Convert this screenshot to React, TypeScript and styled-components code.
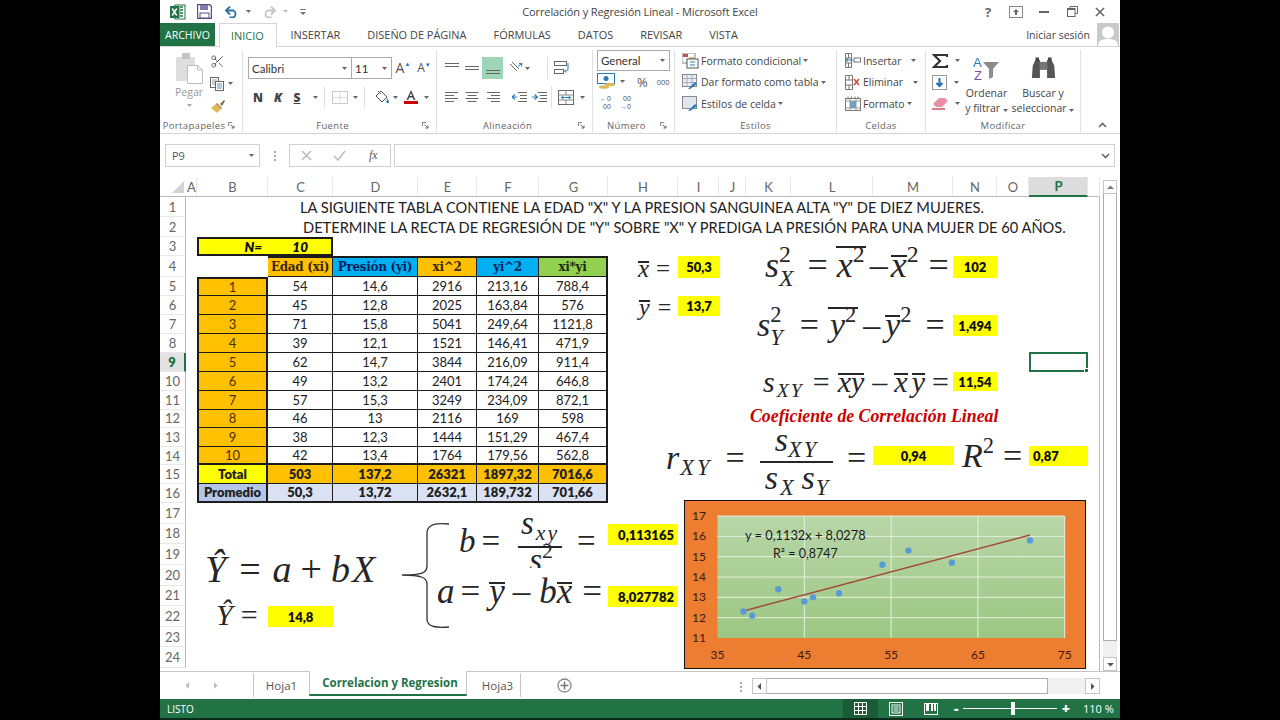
import React from "react";
import styled, { createGlobalStyle } from "styled-components";
import { Scissors } from "lucide-react";

const Global = createGlobalStyle`
  html, body { margin: 0; padding: 0; background: #000; overflow: hidden; }
  #root { width: 1280px; height: 720px; }
  * { box-sizing: border-box; }
`;
const ui = `"Open Sans", "Liberation Sans", sans-serif`;
const cal = `Lato, "Open Sans", sans-serif`;
const serif = `"Liberation Serif", serif`;

const Page = styled.div`width:1280px;height:720px;background:#000;display:flex;justify-content:center;`;
const Win = styled.div`width:960px;height:720px;background:#fff;display:flex;flex-direction:column;font-family:${ui};color:#444;border-bottom:2px solid #0c2a1a;`;

/* title bar */
const TitleBar = styled.div`height:23px;display:grid;grid-template-columns:1fr auto 1fr;align-items:center;`;
const Qat = styled.div`display:flex;align-items:center;padding-left:10px;`;
const QatItem = styled.span<{ $w: number }>`width:${p => p.$w}px;display:flex;align-items:center;`;
const Title = styled.div`font-size:11px;color:#444;letter-spacing:-.12px;`;
const WinCtl = styled.div`display:flex;justify-content:flex-end;align-items:center;padding-right:6px;`;
const CtlBtn = styled.span`width:28px;display:flex;justify-content:center;align-items:center;color:#666;font-weight:700;font-size:13px;`;

/* tabs */
const TabRow = styled.div`height:24px;display:flex;align-items:stretch;border-bottom:1px solid #d4d4d4;position:relative;`;
const FileTab = styled.div`width:55px;background:#217346;color:#fff;font-size:10.5px;display:flex;align-items:center;justify-content:center;margin-right:4px;`;
const Tab = styled.div<{ $active?: boolean }>`padding:0 13.5px;font-size:10.95px;display:flex;align-items:center;color:${p => p.$active ? "#217346" : "#444"};white-space:nowrap;
  ${p => p.$active ? "background:#fff;border:1px solid #d4d4d4;border-bottom:1px solid #fff;height:25px;padding:0 11px;width:58px;" : ""}`;
const Signin = styled.div`margin-left:auto;display:flex;align-items:center;gap:7px;font-size:10.5px;`;
const Avatar = styled.div`width:22px;height:23px;background:#c9c9c9;display:flex;align-items:flex-end;margin-right:1px;`;

/* ribbon */
const Ribbon = styled.div`height:87px;display:flex;padding:3px 0 0;border-bottom:1px solid #d4d4d4;`;
const Group = styled.div<{ $w: number }>`width:${p => p.$w}px;display:flex;flex-direction:column;border-right:1px solid #e1e1e1;margin-bottom:1px;`;
const GroupBody = styled.div<{ $pad?: number }>`flex:1;display:flex;padding-left:${p => p.$pad ?? 0}px;min-height:0;`;
const GroupFoot = styled.div`height:14px;display:flex;align-items:center;`;
const GroupLabel = styled.span`flex:1;text-align:center;font-size:9.5px;letter-spacing:.35px;color:#666;white-space:nowrap;`;
const Launcher = styled.span`width:14px;display:flex;`;
const Collapse = styled.div`flex:1;display:flex;align-items:flex-end;justify-content:flex-end;padding:0 13px 5px 0;`;

const PasteCol = styled.div`width:44px;margin-left:7px;display:flex;flex-direction:column;align-items:center;padding-top:3px;font-size:10.5px;color:#999;`;
const PasteLabel = styled.span`margin-top:1px;line-height:14px;margin-bottom:5px;`;
const SmallCol = styled.div`display:flex;flex-direction:column;align-items:flex-start;padding-top:3px;gap:5px;margin-left:-1px;`;
const SmallBtn = styled.div`height:17px;display:flex;align-items:center;gap:4px;`;

const ToolRows = styled.div`display:flex;flex-direction:column;gap:7px;padding-top:7px;`;
const ToolRow = styled.div`height:22px;display:flex;align-items:center;`;
const Combo = styled.div<{ $w: number; $nl?: boolean }>`width:${p => p.$w}px;height:22px;border:1px solid #ababab;${p => p.$nl ? "border-left:0;" : ""}display:flex;align-items:center;justify-content:space-between;padding:0 4px 0 3px;font-family:${cal};font-size:11.5px;color:#333;`;
const GrowBtn = styled.div<{ $size: number; $w: number }>`width:${p => p.$w}px;font-family:${ui};font-size:${p => p.$size}px;display:flex;justify-content:center;align-items:flex-start;color:#555;line-height:1;`;
const TinyUp = styled.span`font-size:6px;color:#2a6fb6;`;
const FontLetter = styled.span<{ $w: number; $i?: boolean; $u?: boolean }>`width:${p => p.$w}px;text-align:center;font-size:12px;font-weight:800;color:#444;${p => p.$i ? "font-style:italic;" : ""}${p => p.$u ? "text-decoration:underline;" : ""}`;
const Gap = styled.span<{ $w: number }>`width:${p => p.$w}px;flex:none;display:inline-block;`;
const VLine = styled.span`width:1px;height:22px;background:#e1e1e1;flex:none;`;
const IconCell = styled.span<{ $w: number; $on?: boolean }>`width:${p => p.$w}px;height:22px;display:flex;align-items:center;justify-content:center;flex:none;${p => p.$on ? "background:#9fd5b7;" : ""}`;
const NumCombo = styled(Combo)`font-size:11.5px;height:21px;border-color:#ababab;font-family:${cal};`;
const NumRows = styled.div`display:flex;flex-direction:column;padding:0 0 0 4px;`;
const NumRow = styled.div`height:21px;display:flex;align-items:center;font-size:13px;color:#555;`;
const Mini = styled.span`font-size:7.5px;color:#555;`;
const DecStack = styled.span`display:inline-flex;flex-direction:column;align-items:flex-end;font-family:"Liberation Sans",sans-serif;font-size:7px;line-height:8px;color:#555;`;
const DecArrow = styled.span`color:#2a7ab8;`;

const StyleCol = styled.div`display:flex;flex-direction:column;padding:0 0 0 7px;gap:0;`;
const StyleRow = styled.div`height:21.5px;display:flex;align-items:center;gap:2px;font-size:10.5px;white-space:nowrap;color:#444;`;
const StyleIcon = styled.span<{ $w?: number }>`width:${p => p.$w ?? 17}px;display:flex;justify-content:center;`;
const ModCol = styled.div`display:flex;flex-direction:column;padding:0 0 0 6px;width:37px;`;
const BigBtn = styled.div<{ $w: number }>`width:${p => p.$w}px;display:flex;flex-direction:column;align-items:center;font-size:10.5px;line-height:15px;text-align:center;color:#444;white-space:nowrap;padding-top:3px;`;
const BigIcon = styled.div`height:32px;display:flex;align-items:center;justify-content:center;margin-bottom:1px;`;

/* formula bar */
const FormulaBar = styled.div`height:43px;padding:10px 5px 10px 5px;display:flex;align-items:stretch;`;
const NameBox = styled.div`width:95px;border:1px solid #d0d0d0;display:flex;align-items:center;justify-content:space-between;padding:0 5px 0 6px;font-size:11px;color:#555;`;
const Dots = styled.div`width:29px;display:flex;flex-direction:column;align-items:center;justify-content:center;gap:2px;`;
const Dot = styled.span`width:2px;height:2px;background:#aaa;`;
const FxBox = styled.div`width:102px;border:1px solid #d0d0d0;display:flex;align-items:center;margin-right:3px;`;
const FxCell = styled.span`flex:1;display:flex;justify-content:center;align-items:center;`;
const FxText = styled.span`font-family:${serif};font-style:italic;font-size:12px;color:#555;`;
const Input = styled.div`flex:1;border:1px solid #d0d0d0;display:flex;align-items:center;justify-content:flex-end;padding-right:4px;`;

/* sheet */
const Main = styled.div`flex:1;display:flex;min-height:0;`;
const colW = [26, 11, 71, 65, 85, 59, 62, 69, 70, 41, 27, 45, 82, 80, 44, 32, 59, 12];
const rowH = [20, 20, 20, 19, 21, 19, 19, 19, 19, 19, 18.5, 19, 18.5, 19, 18, 19, 18.5, 21, 20.5, 21, 20.5, 20.5, 21, 20, 21];
const Sheet = styled.div`width:940px;position:relative;display:grid;align-content:start;
  grid-template-columns:${colW.map(w => w + "px").join(" ")};
  grid-template-rows:${rowH.map(h => h + "px").join(" ")};border-right:1px solid #bdbdbd;`;
const Corner = styled.div`grid-column:1;grid-row:1;background:#fff;border-bottom:1px solid #b8b8b8;display:flex;align-items:flex-end;justify-content:flex-end;padding:0 2px 3px 0;`;
const ColHead = styled.div<{ $col: number; $on?: boolean }>`grid-row:1;grid-column:${p => p.$col};display:flex;align-items:center;justify-content:center;font-family:${cal};font-size:13px;
  border-right:1px solid #e8e8e8;border-bottom:1px solid #b8b8b8;background:#fff;color:#666;padding-left:1px;
  ${p => p.$on ? "background:#dcdcdc;color:#217346;font-weight:700;border-bottom:2px solid #217346;" : ""}`;
const RowHead = styled.div<{ $row: number; $on?: boolean }>`grid-column:1;grid-row:${p => p.$row};display:flex;align-items:center;justify-content:center;font-family:${cal};font-size:13px;
  border-right:1px solid #b8b8b8;border-bottom:1px solid #e8e8e8;background:#fff;color:#666;
  ${p => p.$on ? "background:#e2e2e2;color:#217346;font-weight:800;border-right:2px solid #217346;" : ""}`;
const HeadingText = styled.div<{ $row: number; $pad: number }>`grid-column:3 / -1;grid-row:${p => p.$row};padding-left:${p => p.$pad}px;font-family:${cal};font-size:14.65px;color:#222;white-space:nowrap;display:flex;align-items:center;`;
const Cell = styled.div<{ $col: number; $row: number; $bg?: string; $b?: boolean; $c?: string; $thickR?: boolean; $thickB?: boolean; $thickL?: boolean; $thickT?: boolean; $hd?: boolean }>`
  grid-column:${p => p.$col};grid-row:${p => p.$row};display:flex;align-items:center;justify-content:center;white-space:nowrap;overflow:hidden;
  background:${p => p.$bg ?? "#fff"};color:${p => p.$c ?? "#222"};font-family:${p => p.$hd ? `"DejaVu Serif", serif` : cal};font-size:${p => p.$hd ? "12px" : "13px"};letter-spacing:${p => p.$hd ? "-.3px" : "0"};
  font-weight:${p => p.$b ? 800 : 400};
  border-right:${p => p.$thickR ? 2 : 1}px solid #1c1c1c;border-bottom:${p => p.$thickB ? 2 : 1}px solid #1c1c1c;
  ${p => p.$thickL ? "border-left:2px solid #1c1c1c;" : ""}${p => p.$thickT ? "border-top:2px solid #1c1c1c;" : ""}`;
const MergedN = styled.div`grid-column:3 / 5;grid-row:4;background:#ffff00;border:2px solid #1c1c1c;display:grid;grid-template-columns:63px 1fr;font-family:${cal};font-weight:800;font-style:italic;font-size:13.5px;color:#111;align-items:center;text-align:right;padding-right:23px;`;
const Selected = styled.div`grid-column:17;grid-row:10;border:2px solid #217346;position:relative;margin:-1px 0 0 0;`;
const Handle = styled.span`position:absolute;right:-3px;bottom:-3px;width:5px;height:5px;background:#217346;border:1px solid #fff;`;

/* floating objects on the sheet canvas */
const Float = styled.div<{ $x: number; $y: number }>`position:absolute;left:${p => p.$x - 160}px;top:${p => p.$y - 177}px;`;
const Formula = styled(Float)<{ $size: number }>`display:flex;align-items:baseline;font-family:${serif};font-size:${p => p.$size}px;line-height:1;color:#262626;white-space:nowrap;`;
const V = styled.i`font-style:italic;`;
const Bar = styled.span<{ $tall?: boolean; $pad?: number }>`display:inline-block;border-top:2px solid #262626;line-height:${p => p.$tall ? .965 : .46};padding:0 ${p => p.$pad ?? 0}px;`;
const Scripts = styled.span`display:inline-flex;flex-direction:column;font-size:.66em;line-height:1;position:relative;top:-.62em;`;
const SubS = styled.span<{ $ls?: number }>`font-size:.66em;position:relative;top:.26em;font-style:italic;letter-spacing:${p => p.$ls ?? 0}px;`;
const SupS = styled.span`font-size:.66em;position:relative;top:-.62em;`;
const Frac = styled.span<{ $w: number }>`width:${p => p.$w}px;display:flex;flex-direction:column;align-items:center;`;
const FracTop = styled.span<{ $pb: number }>`border-bottom:2px solid #262626;padding-bottom:${p => p.$pb}px;width:100%;text-align:center;`;
const FracBot = styled.span<{ $clip?: number; $mt?: number }>`display:flex;align-items:baseline;margin-top:${p => p.$mt ?? 0}px;${p => p.$clip ? `height:${p.$clip}px;overflow:hidden;` : ""}`;
const Val = styled(Float)<{ $w: number; $h: number; $align?: string }>`width:${p => p.$w}px;height:${p => p.$h}px;background:#ffff00;display:flex;align-items:center;justify-content:${p => p.$align ?? "center"};padding:0 4px;font-family:${cal};font-weight:800;font-size:13px;color:#111;`;
const RedTitle = styled(Float)`font-family:${serif};font-style:italic;font-weight:700;font-size:17.8px;color:#c00;white-space:nowrap;`;
const ChartBox = styled(Float)`width:402px;height:169px;border:1px solid #111;background:#ed7d31;`;
const FreeSvg = styled(Float)`line-height:0;`;

/* scrollbar */
const VScroll = styled.div`width:20px;padding:3px 3px 0 3px;display:flex;flex-direction:column;background:#fff;`;
const SBtn = styled.div`height:14px;border:1px solid #c6c6c6;display:flex;align-items:center;justify-content:center;`;
const SThumb = styled.div`height:447px;border:1px solid #ababab;border-top:0;background:#fff;`;
const STrack = styled.div`flex:1;background:#f0f0f0;`;

/* sheet tabs */
const TabsBar = styled.div`height:28px;display:flex;align-items:flex-start;background:#fff;border-top:1px solid #c6c6c6;`;
const Nav = styled.div`width:94px;height:24px;display:flex;align-items:center;padding-left:24px;gap:21px;border-right:1px solid #c6c6c6;margin-top:1px;`;
const SheetTab = styled.div<{ $w: number; $on?: boolean; $pl?: number }>`width:${p => p.$w}px;height:24px;display:flex;align-items:center;justify-content:center;font-size:11.5px;padding-left:${p => p.$pl ?? 0}px;
  ${p => p.$on ? "background:#fff;color:#217346;font-weight:700;border:1px solid #c6c6c6;border-top:0;border-bottom:2px solid #217346;margin-top:-1px;height:25px;" : "color:#555;margin-top:1px;"}`;
const TabSep = styled.span`width:1px;height:24px;background:#c6c6c6;margin-top:1px;`;
const Plus = styled.div`width:86px;height:24px;margin-top:1px;display:flex;align-items:center;justify-content:center;`;
const HDots = styled(Dots)`width:22px;height:24px;margin:3px 0 0 auto;`;
const HScroll = styled.div`width:348px;height:16px;margin:6px 20px 0 0;display:flex;align-items:stretch;`;
const HBtn = styled.div`width:15px;border:1px solid #c6c6c6;display:flex;align-items:center;justify-content:center;`;
const HThumb = styled.div`width:281px;border:1px solid #ababab;border-left:0;background:#fff;`;
const HTrack = styled.div`flex:1;background:#f0f0f0;`;

/* status */
const Status = styled.div`height:19px;background:#217346;display:flex;align-items:center;color:#fff;font-size:10px;padding-left:7px;`;
const StatusText = styled.span`margin-right:auto;`;
const ViewBtn = styled.span<{ $on?: boolean }>`width:35px;height:19px;display:flex;align-items:center;justify-content:center;${p => p.$on ? "background:#1a5c38;" : ""}`;
const Zoomer = styled.div`width:128px;display:flex;align-items:center;justify-content:space-between;margin-left:4px;padding:0 10px 0 2px;font-weight:800;font-size:14px;`;
const SliderTrack = styled.div`width:94px;height:1px;background:#fff;position:relative;`;
const SliderThumb = styled.span`position:absolute;left:48px;top:-6px;width:4px;height:13px;background:#fff;`;
const Pct = styled.span`width:37px;font-size:11px;margin-left:3px;`;

/* icons */
type P = { c?: string };
const XlLogo = () => <svg width="16" height="16" viewBox="0 0 16 16"><rect x="5" y="1" width="10" height="14" fill="#fff" stroke="#217346" /><path d="M10 3h3M10 6h3M10 9h3M10 12h3" stroke="#217346" strokeWidth="1.5" /><rect x="0" y="2" width="9.5" height="12" fill="#217346" /><path d="M2.2 4.5l4.6 7M6.8 4.5l-4.6 7" stroke="#fff" strokeWidth="1.5" /></svg>;
const Save = () => <svg width="15" height="15" viewBox="0 0 15 15"><path d="M.5.5h12l2 2v12H.5z" fill="#fff" stroke="#5a4a86" strokeWidth="1.4" /><rect x="3" y="1" width="8" height="5" fill="#8a77b0" /><rect x="3" y="9" width="9" height="5" fill="#fff" stroke="#5a4a86" /></svg>;
const Undo = ({ c = "#2a6ea8" }: P) => <svg width="14" height="12" viewBox="0 0 14 12"><path d="M1 4.5h7.5a4 4 0 0 1 0 7h-4" fill="none" stroke={c} strokeWidth="1.8" /><path d="M5 .5L1 4.5l4 4" fill="none" stroke={c} strokeWidth="1.8" /></svg>;
const Redo = () => <svg width="14" height="12" viewBox="0 0 14 12"><path d="M13 4.5H5.5a4 4 0 0 0 0 7h4" fill="none" stroke="#c4c4c4" strokeWidth="1.8" /><path d="M9 .5l4 4-4 4" fill="none" stroke="#c4c4c4" strokeWidth="1.8" /></svg>;
const Caret = ({ c = "#666" }: P) => <svg width="5" height="3" viewBox="0 0 5 3"><path d="M0 0h5L2.5 3z" fill={c} /></svg>;
const CustomQat = () => <svg width="6" height="6" viewBox="0 0 6 6"><path d="M0 0h6v1H0zM0 3h6L3 6z" fill="#777" /></svg>;
const RibbonDisp = () => <svg width="14" height="12" viewBox="0 0 14 12"><rect x=".5" y=".5" width="13" height="11" fill="#fff" stroke="#888" /><path d="M7 3l3 3H8v3H6V6H4z" fill="#666" /></svg>;
const Min = () => <svg width="10" height="2"><rect width="10" height="2" fill="#666" /></svg>;
const Restore = () => <svg width="11" height="11" viewBox="0 0 11 11"><path d="M3 2.5V.5h7.5v7H8" fill="none" stroke="#666" /><rect x=".5" y="2.5" width="7.5" height="8" fill="#fff" stroke="#666" /><path d="M.5 3h7.5" stroke="#666" strokeWidth="2" /></svg>;
const Close = () => <svg width="10" height="10" viewBox="0 0 10 10"><path d="M1 1l8 8M9 1l-8 8" stroke="#666" strokeWidth="1.6" /></svg>;
const Person = () => <svg width="22" height="21" viewBox="0 0 22 21"><circle cx="11" cy="7.5" r="6" fill="#fff" /><path d="M1 21c0-6 5-7 10-7s10 1 10 7z" fill="#fff" /></svg>;
const PasteIco = () => <svg width="27" height="31" viewBox="0 0 27 31"><rect x="0" y="4" width="19" height="24" fill="#dedede" /><rect x="6" y="0" width="8" height="6" fill="#c4c4c4" /><path d="M11.500 12.500h10l5 4.500v13.500h-15z" fill="#fff" stroke="#bdbdbd" /><path d="M21.500 12.500v4.500h5" fill="none" stroke="#bdbdbd" /></svg>;
const CopyIco = () => <svg width="14" height="14" viewBox="0 0 14 14"><rect x=".5" y=".5" width="8" height="10" fill="#fff" stroke="#666" /><path d="M2 3h5M2 5h5M2 7h3" stroke="#999" /><rect x="5.5" y="4.5" width="8" height="9" fill="#fff" stroke="#666" /><path d="M7 7h5M7 9h5M7 11h5" stroke="#5a8fc4" /></svg>;
const BrushIco = () => <svg width="16" height="14" viewBox="0 0 16 14"><path d="M1 9l6-5 5 5-5 5z" fill="#e0b955" /><path d="M10 5l4-4 1 1-3 5z" fill="#8a6a3a" /><path d="M7 4l5 5-1 1-5-5z" fill="#999" /></svg>;
const Lines = ({ a }: { a: "l" | "c" | "r" }) => {
  const w = [13, 9, 13, 9];
  return <svg width="14" height="11" viewBox="0 0 14 11">{[0, 1, 2, 3].map(i => {
    const l = w[i]; const x = a === "l" ? 0 : a === "r" ? 14 - l : (14 - l) / 2;
    return <rect key={i} x={x} y={i * 3} width={l} height="1" fill="#666" />;
  })}</svg>;
};
const Flat = ({ y }: { y: number }) => <svg width="14" height="14" viewBox="0 0 14 14"><rect x="0" y={y} width="14" height="1" fill="#666" /><rect x="0" y={y + 3} width="14" height="1" fill="#666" /></svg>;
const Indent = ({ rev }: { rev?: boolean }) => <svg width="15" height="11" viewBox="0 0 15 11"><path d="M6 .5h9M8 3.500h7M8 6.500h7M6 9.500h9" stroke="#666" /><path d={rev ? "M0 5h5M3 2.500L0 5l3 2.500" : "M0 5h5M2.500 2.500L5.500 5l-3 2.500"} fill="none" stroke="#2a7ab8" strokeWidth="1.2" /></svg>;
const Orient = () => <svg width="15" height="14" viewBox="0 0 15 14"><path d="M1 3l7 7M3 1l7 7" stroke="#666" /><path d="M9 5.500l4-3M13 2.500l-3 .2M13 2.500l-.6 3" stroke="#2a7ab8" fill="none" /></svg>;
const WrapIco = () => <svg width="16" height="14" viewBox="0 0 16 14"><rect x=".5" y=".5" width="12" height="4" fill="#fff" stroke="#666" /><rect x=".5" y="8.500" width="9" height="4" fill="#fff" stroke="#666" /><path d="M14 2v6c0 2-1 2-3 2M12 8.500L10.500 10l1.500 1.500" fill="none" stroke="#2a7ab8" /></svg>;
const MergeIco = () => <svg width="16" height="15" viewBox="0 0 16 15"><rect x=".5" y=".5" width="15" height="14" fill="#fff" stroke="#666" /><path d="M.5 5h15M.5 10h15M8 .5V5M8 10v4.500" stroke="#888" /><path d="M3 7.500h10M3.500 7.500l2-1.500M3.500 7.500l2 1.500M12.500 7.500l-2-1.500M12.500 7.500l-2 1.500" stroke="#2a7ab8" fill="none" /></svg>;
const BorderIco = () => <svg width="16" height="13" viewBox="0 0 16 13"><rect x=".5" y=".5" width="15" height="12" fill="none" stroke="#999" strokeDasharray="1 1" /><path d="M8 .5v12M.5 6.500h15" stroke="#bbb" strokeDasharray="1 1" /></svg>;
const FillIco = () => <svg width="16" height="14" viewBox="0 0 16 14"><path d="M7 1l6 6-5 5-6-6z" fill="#fff" stroke="#555" /><path d="M4 1l3 3" stroke="#555" /><path d="M13 8c1 2 2 2.500 2 4a1.200 1.200 0 0 1-2.500 0c0-1 0-2 .5-4z" fill="#2a7ab8" /></svg>;
const ColorA = () => <svg width="14" height="16" viewBox="0 0 14 16"><path d="M7 1l4.500 10H9.800L8.800 8.500H5.200L4.200 11H2.500zM5.800 7h2.400L7 4z" fill="#444" /><rect x="0" y="12" width="14" height="3" fill="#c00" /></svg>;
const Accounting = () => <svg width="19" height="18" viewBox="0 0 19 18"><rect x=".5" y=".5" width="17" height="10" fill="#fff" stroke="#2a7ab8" /><circle cx="9" cy="5.500" r="2.500" fill="#2a7ab8" /><ellipse cx="7" cy="14" rx="5" ry="1.800" fill="#e0b955" /><ellipse cx="13" cy="11.500" rx="5" ry="1.800" fill="#e0b955" /></svg>;
const CondIco = () => <svg width="17" height="16" viewBox="0 0 17 16"><rect x="0" y="0" width="13" height="10" fill="#fff" stroke="#888" /><rect x="1" y="1" width="5" height="3" fill="#c0504d" /><rect x="7" y="4" width="5" height="3" fill="#e0b955" /><rect x="5" y="6" width="11" height="9" fill="#fff" stroke="#555" /><path d="M8 9h5M8 12h5" stroke="#2a7ab8" /></svg>;
const TableIco = () => <svg width="17" height="16" viewBox="0 0 17 16"><rect x=".5" y=".5" width="14" height="12" fill="#e8eef5" stroke="#888" /><path d="M.5 4.500h14M.5 8.500h14M5 .5v12M10 .5v12" stroke="#aab" /><path d="M6 15l7-7 2 2-7 5z" fill="#2a7ab8" /></svg>;
const CellStyleIco = () => <svg width="17" height="16" viewBox="0 0 17 16"><rect x=".5" y=".5" width="14" height="12" fill="#dfe6ee" stroke="#888" /><path d="M6 15l7-7 2 2-7 5z" fill="#2a7ab8" /></svg>;
const InsIco = () => <svg width="16" height="15" viewBox="0 0 16 15"><path d="M.5 .5h6v14h-6zM.5 5h6M.5 10h6M3.500 .5V5M3.500 10v4.500" fill="#fff" stroke="#777" /><rect x="9" y="5" width="6.500" height="4" fill="#fff" stroke="#777" /><path d="M1 7h7M3 5.500L1 7l2 1.500" stroke="#2a7ab8" fill="none" /></svg>;
const DelIco = () => <svg width="16" height="15" viewBox="0 0 16 15"><path d="M.5 .5h7v14h-7zM.5 5h7M.5 10h7M4 .5V5M4 10v4.500" fill="#fff" stroke="#777" /><path d="M9 4l5 6M14 4l-5 6" stroke="#d2492a" strokeWidth="1.500" /></svg>;
const FmtIco = () => <svg width="16" height="15" viewBox="0 0 16 15"><rect x=".5" y="2.500" width="15" height="12" fill="#fff" stroke="#777" /><rect x="5" y="5" width="6" height="7" fill="#2a7ab8" opacity=".7" /><path d="M.5 5h15M.5 12h15M5 2.500v12M11 2.500v12" stroke="#999" /><path d="M3 .5v2M6.500 .5v2M10 .5v2M13 .5v2" stroke="#777" /></svg>;
const Sigma = () => <svg width="16" height="14" viewBox="0 0 16 14"><path d="M15 3V1H2l6 6-6 6h13v-2" fill="none" stroke="#333" strokeWidth="2.200" /></svg>;
const FillDown = () => <svg width="15" height="15" viewBox="0 0 15 15"><rect x=".5" y=".5" width="14" height="14" fill="#fff" stroke="#999" /><path d="M7.500 3v8M4.500 8l3 3 3-3" fill="none" stroke="#1f6fb6" strokeWidth="2" /></svg>;
const Eraser = () => <svg width="16" height="13" viewBox="0 0 16 13"><path d="M7 1h6l3 3-6 6H4L1 7z" fill="#e98fa6" /><path d="M0 12h13" stroke="#c55" strokeWidth="1.500" /></svg>;
const SortIco = () => <svg width="27" height="28" viewBox="0 0 27 28"><text x="0" y="12" fontFamily="Liberation Sans" fontSize="13" fill="#2a7ab8">A</text><text x="1" y="25" fontFamily="Liberation Sans" fontSize="13" fill="#7a4fa8">Z</text><path d="M10 7h16l-6 7v8l-4 2V14z" fill="#8c8c8c" /></svg>;
const Binoc = () => <svg width="25" height="24" viewBox="0 0 28 26"><path d="M2 9l3-6h5v20H1zM26 9l-3-6h-5v20h9z" fill="#555" /><rect x="10" y="5" width="8" height="9" fill="#777" /><path d="M5 0h4v4H5zM19 0h4v4h-4z" fill="#444" /></svg>;
const Launch = () => <svg width="7" height="7" viewBox="0 0 7 7"><path d="M.5 4V.5H4" fill="none" stroke="#888" /><path d="M2.500 2.500L6 6M6 3.500V6H3.500" fill="none" stroke="#666" /></svg>;
const Chev = ({ up }: { up?: boolean }) => <svg width="9" height="6" viewBox="0 0 9 6"><path d={up ? "M1 5l3.500-3.500L8 5" : "M1 1l3.500 3.500L8 1"} fill="none" stroke="#666" strokeWidth="1.600" /></svg>;
const Tri = ({ d, c = "#777" }: { d: "u" | "d" | "l" | "r"; c?: string }) => <svg width="7" height="7" viewBox="0 0 7 7"><path fill={c} d={{ u: "M0 5h7L3.500 1.500z", d: "M0 2h7L3.500 5.500z", l: "M5 0v7L1.500 3.500z", r: "M2 0v7l3.500-3.500z" }[d]} /></svg>;
const CornerTri = () => <svg width="12" height="12" viewBox="0 0 12 12"><path d="M12 0v12H0z" fill="#d4d4d4" /></svg>;
const XIco = () => <svg width="11" height="11" viewBox="0 0 11 11"><path d="M1 1l9 9M10 1l-9 9" stroke="#bbb" strokeWidth="1.500" /></svg>;
const Check = () => <svg width="13" height="11" viewBox="0 0 13 11"><path d="M1 6l4 4 7-9" fill="none" stroke="#bbb" strokeWidth="1.500" /></svg>;
const PlusC = () => <svg width="15" height="15" viewBox="0 0 15 15"><circle cx="7.500" cy="7.500" r="6.500" fill="#fff" stroke="#888" strokeWidth="1.300" /><path d="M7.500 3.500v8M3.500 7.500h8" stroke="#777" strokeWidth="1.500" /></svg>;
const ViewNormal = () => <svg width="13" height="13" viewBox="0 0 13 13"><path d="M.5 .5h12v12H.5zM.5 4.500h12M.5 8.500h12M4.500 .5v12M8.500 .5v12" fill="none" stroke="#fff" /></svg>;
const ViewPage = () => <svg width="14" height="14" viewBox="0 0 14 14"><rect x=".5" y=".5" width="13" height="13" fill="none" stroke="#fff" /><rect x="3" y="3" width="8" height="8" fill="none" stroke="#fff" /><path d="M4.500 5h5M4.500 7h5M4.500 9h5" stroke="#fff" /></svg>;
const ViewBreak = () => <svg width="14" height="12" viewBox="0 0 14 12"><rect x=".5" y=".5" width="13" height="11" fill="none" stroke="#fff" /><path d="M2 1h3v7H2zM7 1h2v7H7zM10 1h2v7h-2z" fill="#fff" /></svg>;

const Brace = () => <svg width="52" height="108" viewBox="0 0 52 108" fill="none"><path d="M49 2C36 1 28 2 27 10L27 44C27 51 22 53 2 53C22 53 27 56 27 62L27 98C28 105 36 106 49 105" stroke="#333" strokeWidth="1.300" /></svg>;

const pts: [number, number][] = [[54, 14.6], [45, 12.8], [71, 15.8], [39, 12.1], [62, 14.7], [49, 13.2], [57, 15.3], [46, 13], [38, 12.3], [42, 13.4]];
const X = (x: number) => 32.5 + (x - 35) * 8.68;
const Y = (y: number) => 137 - (y - 11) * 20.33;
const ChartSvg = () => (
  <svg width="400" height="167" viewBox="0 0 400 167">
    <defs><linearGradient id="pl" x1="0" x2="0" y1="0" y2="1"><stop offset="0" stopColor="#b8d6a8" /><stop offset="1" stopColor="#9cc783" /></linearGradient></defs>
    <rect x="32.500" y="15" width="347" height="122" fill="url(#pl)" />
    {[12, 13, 14, 15, 16, 17].map(v => <line key={v} x1="32.500" x2="379.500" y1={Y(v)} y2={Y(v)} stroke="#e6efdf" strokeWidth="1" />)}
    {[45, 55, 65, 75].map(v => <line key={v} x1={X(v)} x2={X(v)} y1="15" y2="137" stroke="#e6efdf" strokeWidth="1" />)}
    {[11, 12, 13, 14, 15, 16, 17].map(v => <text key={v} x="7" y={Y(v) + 4} fontFamily="Lato" fontSize="12" fill="#3d1a08">{v}</text>)}
    {[35, 45, 55, 65, 75].map(v => <text key={v} x={X(v)} y="158" textAnchor="middle" fontFamily="Lato" fontSize="12" fill="#3d1a08">{v}</text>)}
    <line x1={X(38)} y1={Y(0.1132 * 38 + 8.0278)} x2={X(71)} y2={Y(0.1132 * 71 + 8.0278)} stroke="#a4493a" strokeWidth="1.500" />
    {pts.map(([a, b]) => <circle key={a} cx={X(a)} cy={Y(b)} r="3.200" fill="#5b9bd5" />)}
    <text x="60" y="39" fontFamily="Lato" fontSize="12.800" fill="#1a1a1a">y = 0,1132x + 8,0278</text>
    <text x="88" y="57" fontFamily="Lato" fontSize="12.500" fill="#1a1a1a">R² = 0,8747</text>
  </svg>
);

const cols = ["A", "B", "C", "D", "E", "F", "G", "H", "I", "J", "K", "L", "M", "N", "O", "P"];
const data = [
  ["1", "54", "14,6", "2916", "213,16", "788,4"],
  ["2", "45", "12,8", "2025", "163,84", "576"],
  ["3", "71", "15,8", "5041", "249,64", "1121,8"],
  ["4", "39", "12,1", "1521", "146,41", "471,9"],
  ["5", "62", "14,7", "3844", "216,09", "911,4"],
  ["6", "49", "13,2", "2401", "174,24", "646,8"],
  ["7", "57", "15,3", "3249", "234,09", "872,1"],
  ["8", "46", "13", "2116", "169", "598"],
  ["9", "38", "12,3", "1444", "151,29", "467,4"],
  ["10", "42", "13,4", "1764", "179,56", "562,8"],
];
const heads: [string, string, string][] = [["Edad (xi)", "#ffc000", "#3a2500"], ["Presión (yi)", "#00b0f0", "#002060"], ["xi^2", "#ffc000", "#3a2500"], ["yi^2", "#00b0f0", "#002060"], ["xi*yi", "#92d050", "#1c2c10"]];
const totals = ["Total", "503", "137,2", "26321", "1897,32", "7016,6"];
const avgs = ["Promedio", "50,3", "13,72", "2632,1", "189,732", "701,66"];

const Group1 = ({ w, label, launch, pad, children }: { w: number; label: string; launch?: boolean; pad?: number; children: React.ReactNode }) => (
  <Group $w={w}>
    <GroupBody $pad={pad}>{children}</GroupBody>
    <GroupFoot><GroupLabel>{label}</GroupLabel>{launch && <Launcher><Launch /></Launcher>}</GroupFoot>
  </Group>
);

export default function App() {
  return (
    <Page>
      <Global />
      <Win>
        <TitleBar>
          <Qat>
            <QatItem $w={27}><XlLogo /></QatItem>
            <QatItem $w={28}><Save /></QatItem>
            <QatItem $w={21}><Undo /></QatItem>
            <QatItem $w={16}><Caret /></QatItem>
            <QatItem $w={21}><Redo /></QatItem>
            <QatItem $w={17}><Caret c="#bbb" /></QatItem>
            <QatItem $w={10}><CustomQat /></QatItem>
          </Qat>
          <Title>Correlación y Regresión Lineal - Microsoft Excel</Title>
          <WinCtl>
            <CtlBtn>?</CtlBtn><CtlBtn><RibbonDisp /></CtlBtn><CtlBtn><Min /></CtlBtn><CtlBtn><Restore /></CtlBtn><CtlBtn><Close /></CtlBtn>
          </WinCtl>
        </TitleBar>
        <TabRow>
          <FileTab>ARCHIVO</FileTab>
          <Tab $active>INICIO</Tab>
          <Tab>INSERTAR</Tab><Tab>DISEÑO DE PÁGINA</Tab><Tab>FÓRMULAS</Tab><Tab>DATOS</Tab><Tab>REVISAR</Tab><Tab>VISTA</Tab>
          <Signin>Iniciar sesión<Avatar><Person /></Avatar></Signin>
        </TabRow>
        <Ribbon>
          <Group1 w={83} label="Portapapeles" launch>
            <PasteCol><PasteIco /><PasteLabel>Pegar</PasteLabel><Caret c="#aaa" /></PasteCol>
            <SmallCol>
              <SmallBtn><Scissors size={15} color="#555" strokeWidth={1.4} /></SmallBtn>
              <SmallBtn><CopyIco /><Caret /></SmallBtn>
              <SmallBtn><BrushIco /></SmallBtn>
            </SmallCol>
          </Group1>
          <Group1 w={194} label="Fuente" launch pad={5}>
            <ToolRows>
              <ToolRow>
                <Combo $w={104}>Calibri<Caret /></Combo>
                <Combo $w={40} $nl>11<Caret /></Combo>
                <GrowBtn $w={22} $size={14}>A<TinyUp>▲</TinyUp></GrowBtn>
                <GrowBtn $w={20} $size={12}>A<TinyUp>▼</TinyUp></GrowBtn>
              </ToolRow>
              <ToolRow>
                <FontLetter $w={20}>N</FontLetter>
                <FontLetter $w={20} $i>K</FontLetter>
                <FontLetter $w={18} $u>S</FontLetter>
                <Gap $w={7} /><Caret /><Gap $w={6} /><VLine /><Gap $w={7} />
                <BorderIco /><Gap $w={5} /><Caret /><Gap $w={6} /><VLine /><Gap $w={9} />
                <FillIco /><Gap $w={3} /><Caret /><Gap $w={6} />
                <ColorA /><Gap $w={6} /><Caret />
              </ToolRow>
            </ToolRows>
          </Group1>
          <Group1 w={156} label="Alineación" launch pad={5}>
            <ToolRows>
              <ToolRow>
                <IconCell $w={20}><Flat y={2} /></IconCell>
                <IconCell $w={20}><Flat y={5} /></IconCell>
                <IconCell $w={21} $on><Flat y={9} /></IconCell>
                <Gap $w={4} />
                <IconCell $w={18}><Orient /></IconCell><Caret />
                <Gap $w={17} /><VLine /><Gap $w={2} />
                <IconCell $w={24}><WrapIco /></IconCell>
              </ToolRow>
              <ToolRow>
                <IconCell $w={20}><Lines a="l" /></IconCell>
                <IconCell $w={20}><Lines a="c" /></IconCell>
                <IconCell $w={21}><Lines a="r" /></IconCell>
                <Gap $w={6} />
                <IconCell $w={20}><Indent rev /></IconCell>
                <IconCell $w={20}><Indent /></IconCell>
                <Gap $w={2} /><VLine /><Gap $w={2} />
                <IconCell $w={24}><MergeIco /></IconCell><Gap $w={2} /><Caret />
              </ToolRow>
            </ToolRows>
          </Group1>
          <Group1 w={82} label="Número" launch>
            <NumRows>
              <NumCombo $w={73}>General<Caret /></NumCombo>
              <NumRow><Accounting /><Gap $w={4} /><Caret /><Gap $w={12} />%<Gap $w={9} /><Mini>000</Mini></NumRow>
              <NumRow>
                <Gap $w={3} />
                <DecStack><span><DecArrow>←</DecArrow>0</span><span>00</span></DecStack>
                <Gap $w={9} />
                <DecStack><span>00</span><span><DecArrow>→</DecArrow>0</span></DecStack>
              </NumRow>
            </NumRows>
          </Group1>
          <Group1 w={162} label="Estilos">
            <StyleCol>
              <StyleRow><StyleIcon><CondIco /></StyleIcon>Formato condicional <Caret /></StyleRow>
              <StyleRow><StyleIcon><TableIco /></StyleIcon>Dar formato como tabla <Caret /></StyleRow>
              <StyleRow><StyleIcon><CellStyleIco /></StyleIcon>Estilos de celda <Caret /></StyleRow>
            </StyleCol>
          </Group1>
          <Group1 w={89} label="Celdas">
            <StyleCol>
              <StyleRow><StyleIcon><InsIco /></StyleIcon>Insertar <Gap $w={6} /><Caret /></StyleRow>
              <StyleRow><StyleIcon><DelIco /></StyleIcon>Eliminar <Gap $w={6} /><Caret /></StyleRow>
              <StyleRow><StyleIcon><FmtIco /></StyleIcon>Formato <Caret /></StyleRow>
            </StyleCol>
          </Group1>
          <Group1 w={155} label="Modificar">
            <ModCol>
              <StyleRow><Sigma /><Gap $w={3} /><Caret /></StyleRow>
              <StyleRow><FillDown /><Gap $w={3} /><Caret /></StyleRow>
              <StyleRow><Eraser /><Gap $w={3} /><Caret /></StyleRow>
            </ModCol>
            <BigBtn $w={47}><BigIcon><SortIco /></BigIcon>Ordenar<span>y filtrar <Caret /></span></BigBtn>
            <BigBtn $w={66}><BigIcon><Binoc /></BigIcon>Buscar y<span>seleccionar <Caret /></span></BigBtn>
          </Group1>
          <Collapse><Chev up /></Collapse>
        </Ribbon>
        <FormulaBar>
          <NameBox>P9<Caret /></NameBox>
          <Dots><Dot /><Dot /><Dot /></Dots>
          <FxBox><FxCell><XIco /></FxCell><FxCell><Check /></FxCell><FxCell><FxText>fx</FxText></FxCell></FxBox>
          <Input><Chev /></Input>
        </FormulaBar>
        <Main>
          <Sheet>
            <Corner><CornerTri /></Corner>
            {cols.map((c, i) => <ColHead key={c} $col={i + 2} $on={c === "P"}>{c}</ColHead>)}
            <ColHead $col={18} />
            {rowH.slice(1).map((_, i) => <RowHead key={i} $row={i + 2} $on={i === 8}>{i + 1}</RowHead>)}
            <HeadingText $row={2} $pad={103}>LA SIGUIENTE TABLA CONTIENE LA EDAD "X" Y LA PRESION SANGUINEA ALTA "Y" DE DIEZ MUJERES.</HeadingText>
            <HeadingText $row={3} $pad={106}>DETERMINE LA RECTA DE REGRESIÓN DE "Y" SOBRE "X" Y PREDIGA LA PRESIÓN PARA UNA MUJER DE 60 AÑOS.</HeadingText>
            <MergedN><span>N=</span><span>10</span></MergedN>
            {heads.map(([t, bg, c], i) => <Cell key={t} $hd $b $col={i + 4} $row={5} $bg={bg} $c={c} $thickR={i === 4} $thickT>{t}</Cell>)}
            {data.map((r, ri) => r.map((v, ci) => (
              <Cell key={ci} $col={ci + 3} $row={ri + 6} $bg={ci === 0 ? "#ffc000" : "#fff"} $thickL={ci === 0} $thickR={ci === 0 || ci === 5} $thickB={ri === 9} $thickT={ri === 0 && ci === 0} $c={ci === 0 ? "#4a3200" : "#222"}>{v}</Cell>
            )))}
            {totals.map((v, ci) => <Cell key={v} $b $col={ci + 3} $row={16} $bg={ci === 0 ? "#ffff00" : "#ffc000"} $thickL={ci === 0} $thickR={ci === 0 || ci === 5}>{v}</Cell>)}
            {avgs.map((v, ci) => <Cell key={v} $b $col={ci + 3} $row={17} $bg={ci === 0 ? "#b4c6e7" : "#d9e1f2"} $thickL={ci === 0} $thickR={ci === 0 || ci === 5} $thickB>{v}</Cell>)}
            <Selected><Handle /></Selected>

            <Formula $x={638} $y={256} $size={25}><Bar><V>x</V></Bar><Gap $w={7} />=</Formula>
            <Val $x={678} $y={256} $w={42} $h={22}>50,3</Val>
            <Formula $x={639} $y={295} $size={24}><Bar><V>y</V></Bar><Gap $w={8} />=</Formula>
            <Val $x={678} $y={296} $w={42} $h={20}>13,7</Val>

            <Formula $x={765} $y={246} $size={36}><V>s</V><Scripts><span>2</span><V>X</V></Scripts><Gap $w={14} />=<Gap $w={8} /><Bar $tall $pad={1}><V>x</V><SupS>2</SupS></Bar><Gap $w={4} />–<Gap $w={3} /><Bar><V>x</V></Bar><SupS>2</SupS><Gap $w={10} />=</Formula>
            <Val $x={953} $y={256} $w={44} $h={22}>102</Val>
            <Formula $x={757} $y={307} $size={34}><V>s</V><Scripts><span>2</span><V>Y</V></Scripts><Gap $w={17} />=<Gap $w={9} /><Bar $tall $pad={2}><V>y</V><SupS>2</SupS></Bar><Gap $w={5} />–<Gap $w={5} /><Bar><V>y</V></Bar><SupS>2</SupS><Gap $w={14} />=</Formula>
            <Val $x={953} $y={315} $w={44} $h={21}>1,494</Val>
            <Formula $x={763} $y={367} $size={30}><V>s</V><Gap $w={2} /><SubS $ls={2}>XY</SubS><Gap $w={9} />=<Gap $w={8} /><Bar><V>xy</V></Bar><Gap $w={8} />–<Gap $w={7} /><Bar><V>x</V></Bar><Gap $w={4} /><Bar><V>y</V></Bar><Gap $w={7} />=</Formula>
            <Val $x={953} $y={372} $w={44} $h={19}>11,54</Val>
            <RedTitle $x={750} $y={406}>Coeficiente de Correlación Lineal</RedTitle>

            <Formula $x={666} $y={441} $size={34}><V>r</V><Gap $w={1} /><SubS $ls={3}>XY</SubS><Gap $w={13} />=</Formula>
            <Formula $x={760} $y={423} $size={34}>
              <Frac $w={73}>
                <FracTop $pb={4}><V>s</V><SubS $ls={2}>XY</SubS></FracTop>
                <FracBot $mt={-2}><V>s</V><Gap $w={2} /><SubS>X</SubS><Gap $w={8} /><V>s</V><Gap $w={1} /><SubS>Y</SubS></FracBot>
              </Frac>
            </Formula>
            <Formula $x={847} $y={441} $size={34}>=</Formula>
            <Val $x={873} $y={446} $w={81} $h={19}>0,94</Val>
            <Formula $x={962} $y={439} $size={34}><V>R</V><SupS>2</SupS><Gap $w={9} />=</Formula>
            <Val $x={1029} $y={446} $w={59} $h={20} $align="flex-start">0,87</Val>

            <Formula $x={205} $y={550} $size={38}><V>Ŷ</V><Gap $w={13} />=<Gap $w={12} /><V>a</V><Gap $w={9} />+<Gap $w={9} /><V>b</V><Gap $w={2} /><V>X</V></Formula>
            <Formula $x={216} $y={600} $size={30}><V>Ŷ</V><Gap $w={8} />=</Formula>
            <Val $x={268} $y={606} $w={65} $h={21}>14,8</Val>
            <FreeSvg $x={400} $y={522}><Brace /></FreeSvg>
            <Formula $x={459} $y={525} $size={33}><V>b</V><Gap $w={6} />=</Formula>
            <Formula $x={518} $y={507} $size={33}>
              <Frac $w={44}>
                <FracTop $pb={6}><V>s</V><Gap $w={2} /><SubS $ls={2}>xy</SubS></FracTop>
                <FracBot $clip={24} $mt={-4}><Gap $w={2} /><V>s</V><SupS>2</SupS></FracBot>
              </Frac>
            </Formula>
            <Formula $x={577} $y={525} $size={33}>=</Formula>
            <Val $x={608} $y={524} $w={70} $h={21} $align="flex-end">0,113165</Val>
            <Formula $x={437} $y={574} $size={35}><V>a</V><Gap $w={6} />=<Gap $w={9} /><Bar><V>y</V></Bar><Gap $w={8} />–<Gap $w={9} /><V>b</V><Bar><V>x</V></Bar><Gap $w={10} />=</Formula>
            <Val $x={608} $y={586} $w={70} $h={21} $align="flex-end">8,027782</Val>
            <ChartBox $x={684} $y={500}><ChartSvg /></ChartBox>
          </Sheet>
          <VScroll>
            <SBtn><Tri d="u" /></SBtn>
            <SThumb />
            <STrack />
            <SBtn><Tri d="d" c="#555" /></SBtn>
          </VScroll>
        </Main>
        <TabsBar>
          <Nav><Tri d="l" c="#bbb" /><Tri d="r" c="#bbb" /></Nav>
          <SheetTab $w={55}>Hoja1</SheetTab>
          <SheetTab $w={158} $on $pl={4}>Correlacion y Regresion</SheetTab>
          <SheetTab $w={53} $pl={8}>Hoja3</SheetTab>
          <TabSep />
          <Plus><PlusC /></Plus>
          <HDots><Dot /><Dot /><Dot /></HDots>
          <HScroll>
            <HBtn><Tri d="l" c="#555" /></HBtn>
            <HThumb />
            <HTrack />
            <HBtn><Tri d="r" c="#555" /></HBtn>
          </HScroll>
        </TabsBar>
        <Status>
          <StatusText>LISTO</StatusText>
          <ViewBtn $on><ViewNormal /></ViewBtn><ViewBtn><ViewPage /></ViewBtn><ViewBtn><ViewBreak /></ViewBtn>
          <Zoomer>-<SliderTrack><SliderThumb /></SliderTrack>+</Zoomer>
          <Pct>110 %</Pct>
        </Status>
      </Win>
    </Page>
  );
}
